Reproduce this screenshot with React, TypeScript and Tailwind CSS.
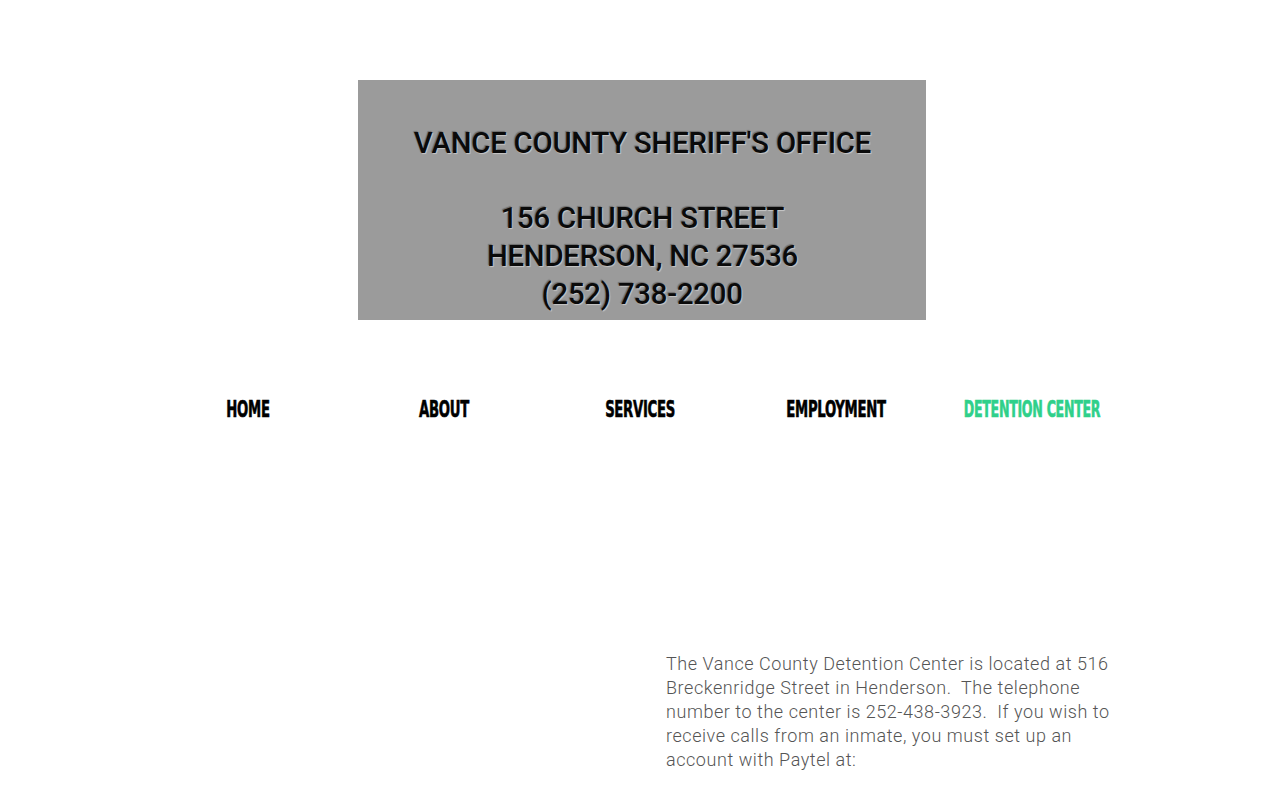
const navItems = ['HOME', 'ABOUT', 'SERVICES', 'EMPLOYMENT', 'DETENTION CENTER']

export default function App() {
  return (
    <div className="min-h-[800px] w-full bg-white overflow-hidden">
      {/* Header banner */}
      <div className="pt-[80px] flex justify-center">
        <div className="w-[568px] h-[240px] ml-[4px] bg-[#9b9b9b] flex flex-col items-center pt-[44px] text-[#0a0a0a] text-[30px] leading-[37.7px] font-medium font-['Roboto','DejaVu_Sans',sans-serif] tracking-[-0.2px] [text-shadow:1px_1px_1px_rgba(255,255,255,0.45),-1px_-1px_1px_rgba(0,0,0,0.3)]">
          <p className="scale-x-[0.975] whitespace-nowrap">VANCE COUNTY SHERIFF'S OFFICE</p>
          <p>&nbsp;</p>
          <p className="scale-x-[0.975] whitespace-nowrap">156 CHURCH STREET</p>
          <p className="scale-x-[0.975] whitespace-nowrap">HENDERSON, NC 27536</p>
          <p className="scale-x-[0.975] whitespace-nowrap">(252) 738-2200</p>
        </div>
      </div>

      {/* Nav */}
      <nav className="mt-[74px] flex pl-[150px]">
        {navItems.map(item => (
          <a
            key={item}
            className={`w-[196px] h-[30px] flex items-center justify-center whitespace-nowrap text-[23px] font-bold font-['DejaVu_Sans_Condensed','DejaVu_Sans',sans-serif] tracking-[-0.5px] [-webkit-text-stroke:0.6px_currentColor] ${item === 'DETENTION CENTER' ? 'text-[#2fd08a] scale-x-[0.61]' : 'text-black scale-x-[0.64]'}`}
          >
            {item}
          </a>
        ))}
      </nav>

      {/* Body text */}
      <div className="mt-[228px] pl-[666px]">
        <p className="w-[462px] text-[18px] leading-[24px] text-[#555555] font-['Roboto','Liberation_Sans',sans-serif] font-light tracking-[0.55px]">
          The Vance County Detention Center is located at 516 Breckenridge Street in Henderson.&nbsp; The telephone number to the center is 252-438-3923.&nbsp; If you wish to receive calls from an inmate, you must set up an account with Paytel at:
        </p>
      </div>
    </div>
  )
}
